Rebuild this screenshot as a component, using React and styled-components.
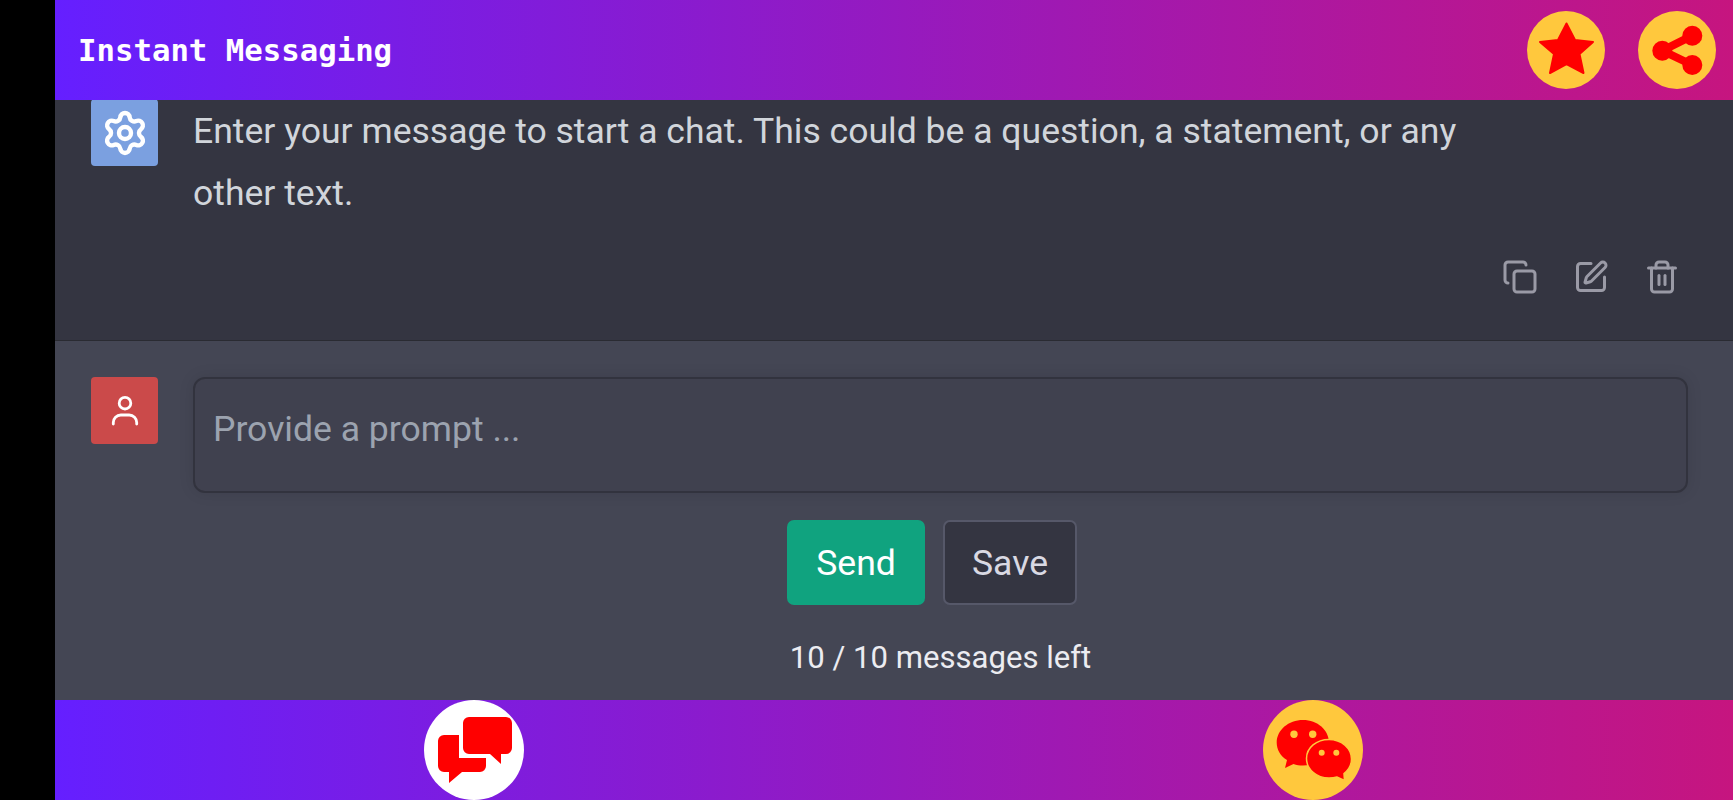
import React from 'react';
import styled, { createGlobalStyle } from 'styled-components';
import { Settings, Copy, SquarePen, Trash2 } from 'lucide-react';

const Global = createGlobalStyle`
  html, body { margin: 0; padding: 0; background: #000; }
  body { font-family: Roboto, "Liberation Sans", sans-serif; }
`;

const Page = styled.div`
  width: 1733px;
  height: 800px;
  padding-left: 55px;
  box-sizing: border-box;
  background: #000;
  overflow: hidden;
`;

const Column = styled.div`
  display: flex;
  flex-direction: column;
  height: 100%;
`;

const Bar = styled.div`
  height: 100px;
  flex: none;
  display: flex;
  align-items: center;
  position: relative;
  z-index: 1;
  background: linear-gradient(90deg, #651fff 0%, #c6157f 100%);
`;

const Header = styled(Bar)`
  justify-content: space-between;
  padding: 0 17px 0 23px;
`;

const Title = styled.h1`
  margin: 0;
  font-family: "DejaVu Sans Mono", monospace;
  font-size: 30.7px;
  font-weight: 700;
  color: #fff;
`;

const HeaderActions = styled.div`
  display: flex;
  gap: 33px;
`;

const RoundButton = styled.button`
  width: ${p => p.$size}px;
  height: ${p => p.$size}px;
  padding: 0;
  border: 0;
  border-radius: 50%;
  background: ${p => p.$bg || '#ffc83d'};
  display: flex;
  align-items: center;
  justify-content: center;
  flex: none;
`;

const Footer = styled(Bar)`
  justify-content: space-around;
  padding-right: 1px;
`;

const Message = styled.section`
  height: 241px;
  flex: none;
  box-sizing: border-box;
  background: #343541;
  border-bottom: 1px solid #2a2b32;
  padding: 0 53px 0 36px;
  display: flex;
  flex-direction: column;
`;

const MessageRow = styled.div`
  display: flex;
  gap: 35px;
  flex: 1;
`;

const Avatar = styled.div`
  width: 67px;
  height: 67px;
  flex: none;
  border-radius: 4px;
  background: ${p => p.$bg};
  color: #fff;
  display: flex;
  align-items: center;
  justify-content: center;
`;

const SystemAvatar = styled(Avatar)`
  margin-top: -1px;
`;

const MessageText = styled.p`
  margin: 0;
  width: 1290px;
  font-size: 35.55px;
  line-height: 62px;
  color: #d1d5db;
`;

const MessageActions = styled.div`
  display: flex;
  justify-content: flex-end;
  gap: 35px;
  color: #9a9aa6;
  padding-bottom: 45px;
`;

const Composer = styled.section`
  flex: 1;
  display: flex;
  gap: 35px;
  background: #444654;
  padding: 36px 45px 0 36px;
`;

const ComposerBody = styled.div`
  flex: 1;
  display: flex;
  flex-direction: column;
  align-items: stretch;
`;

const PromptBox = styled.div`
  height: 116px;
  box-sizing: border-box;
  padding: 30px 18px;
  background: #40414f;
  border: 2px solid #32333e;
  border-radius: 12px;
  box-shadow: 0 0 15px rgba(0, 0, 0, 0.1);
  font-size: 35.55px;
  line-height: 40px;
  color: #9ca3af;
`;

const ButtonRow = styled.div`
  display: flex;
  justify-content: center;
  gap: 18px;
  margin-top: 27px;
  padding-right: 17px;
`;

const ActionButton = styled.button`
  height: 85px;
  box-sizing: border-box;
  padding: 0;
  width: ${p => p.$width}px;
  border-radius: 7px;
  border: ${p => (p.$primary ? '0' : '2px solid #565869')};
  background: ${p => (p.$primary ? '#10a37f' : '#343541')};
  color: ${p => (p.$primary ? '#fff' : '#d9d9e3')};
  font-family: inherit;
  font-size: 35.55px;
`;

const Quota = styled.div`
  margin-top: 33px;
  text-align: center;
  font-size: 31.1px;
  line-height: 40px;
  color: #ececf1;
`;

const StarIcon = () => (
  <svg width="78" height="78" viewBox="0 0 78 78" fill="#f00" stroke="#f00" strokeWidth="2" strokeLinejoin="round">
    <polygon points="39.500,12.500 48,29 66,31 52.500,43 56.500,62 39.500,53 23,62 27,43 13,31 31,29" />
  </svg>
);

const ShareIcon = () => (
  <svg width="78" height="78" viewBox="0 0 78 78" fill="#f00">
    <circle cx="54.300" cy="24.700" r="10" />
    <circle cx="24.300" cy="39.700" r="10" />
    <circle cx="54.300" cy="54" r="10" />
    <path d="M54.300 24.700 24.300 39.700 54.300 54" fill="none" stroke="#f00" strokeWidth="8" />
  </svg>
);

const UserIcon = () => (
  <svg width="36" height="36" viewBox="0 0 36 36" fill="none" stroke="currentColor" strokeWidth="2.800" strokeLinecap="round">
    <circle cx="18" cy="10.200" r="5.800" />
    <path d="M6.300 31v-1.500a7.500 7.500 0 0 1 7.500-7.500h8.400a7.500 7.500 0 0 1 7.500 7.500V31" />
  </svg>
);

const ChatsIcon = () => (
  <svg width="100" height="100" viewBox="0 0 100 100" fill="#f00">
    <path d="M45 17h37a6 6 0 0 1 6 6v25a6 6 0 0 1-6 6h-5v10L66 54H45a6 6 0 0 1-6-6V23a6 6 0 0 1 6-6z" />
    <path d="M20 35h15v23h27v8a6 6 0 0 1-6 6H38L25 83V72h-5a6 6 0 0 1-6-6V41a6 6 0 0 1 6-6z" />
  </svg>
);

const WeChatIcon = () => (
  <svg width="100" height="100" viewBox="0 0 100 100">
    <path fill="#f00" d="M40 20c14.500 0 26 10 26 22.700S54.500 65.400 40 65.400c-3.500 0-6.500-.5-9.500-1.500L22 68l2-8c-6.500-4-10.300-10.300-10.300-17.300C13.700 30 25.500 20 40 20z" />
    <circle cx="31" cy="34.300" r="3.700" fill="#ffc83d" />
    <circle cx="49.700" cy="34.300" r="3.700" fill="#ffc83d" />
    <path fill="#f00" stroke="#ffc83d" strokeWidth="1.500" d="M66 39.500c12.500 0 22.500 8.800 22.500 19.500 0 5.800-3 11-7.500 14.500l.5 7-7.500-3.500c-2.500.7-5.200 1-8 1-12.500 0-22.500-8.700-22.500-19.500S53.500 39.500 66 39.500z" />
    <circle cx="58.700" cy="52.700" r="3" fill="#ffc83d" />
    <circle cx="73.300" cy="52.700" r="3" fill="#ffc83d" />
  </svg>
);

export default function App() {
  return (
    <Page>
      <Global />
      <Column>
        <Header>
          <Title>Instant Messaging</Title>
          <HeaderActions>
            <RoundButton $size={78}><StarIcon /></RoundButton>
            <RoundButton $size={78}><ShareIcon /></RoundButton>
          </HeaderActions>
        </Header>
        <Message>
          <MessageRow>
            <SystemAvatar $bg="#7ba0e0"><Settings size={48} strokeWidth={2.2} /></SystemAvatar>
            <MessageText>
              Enter your message to start a chat. This could be a question, a statement, or any other text.
            </MessageText>
          </MessageRow>
          <MessageActions>
            <Copy size={36} strokeWidth={2} />
            <SquarePen size={36} strokeWidth={2} />
            <Trash2 size={36} strokeWidth={2} />
          </MessageActions>
        </Message>
        <Composer>
          <Avatar $bg="#cb4a4a"><UserIcon /></Avatar>
          <ComposerBody>
            <PromptBox>Provide a prompt ...</PromptBox>
            <ButtonRow>
              <ActionButton $primary $width={138}>Send</ActionButton>
              <ActionButton $width={134}>Save</ActionButton>
            </ButtonRow>
            <Quota>10 / 10 messages left</Quota>
          </ComposerBody>
        </Composer>
        <Footer>
          <RoundButton $size={100} $bg="#fff"><ChatsIcon /></RoundButton>
          <RoundButton $size={100}><WeChatIcon /></RoundButton>
        </Footer>
      </Column>
    </Page>
  );
}
